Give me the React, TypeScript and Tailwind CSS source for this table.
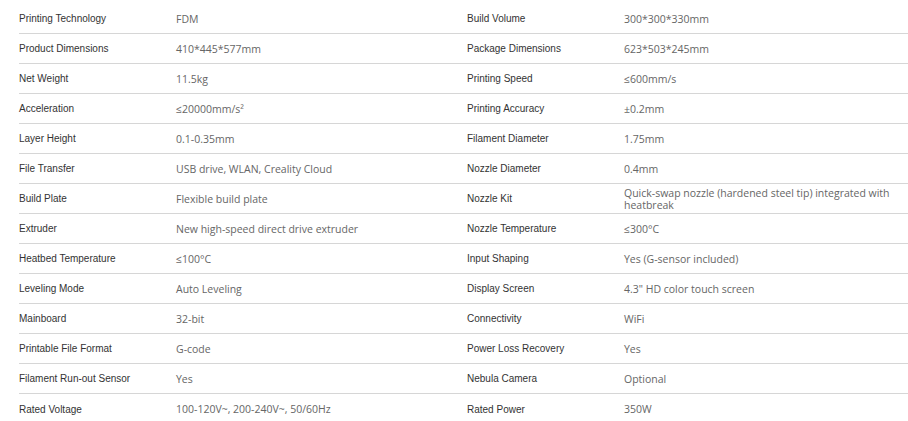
const specs: [string, string, string, string][] = [
  ["Printing Technology", "FDM", "Build Volume", "300*300*330mm"],
  ["Product Dimensions", "410*445*577mm", "Package Dimensions", "623*503*245mm"],
  ["Net Weight", "11.5kg", "Printing Speed", "≤600mm/s"],
  ["Acceleration", "≤20000mm/s²", "Printing Accuracy", "±0.2mm"],
  ["Layer Height", "0.1-0.35mm", "Filament Diameter", "1.75mm"],
  ["File Transfer", "USB drive, WLAN, Creality Cloud", "Nozzle Diameter", "0.4mm"],
  ["Build Plate", "Flexible build plate", "Nozzle Kit", "Quick-swap nozzle (hardened steel tip) integrated with heatbreak"],
  ["Extruder", "New high-speed direct drive extruder", "Nozzle Temperature", "≤300°C"],
  ["Heatbed Temperature", "≤100°C", "Input Shaping", "Yes (G-sensor included)"],
  ["Leveling Mode", "Auto Leveling", "Display Screen", "4.3\" HD color touch screen"],
  ["Mainboard", "32-bit", "Connectivity", "WiFi"],
  ["Printable File Format", "G-code", "Power Loss Recovery", "Yes"],
  ["Filament Run-out Sensor", "Yes", "Nebula Camera", "Optional"],
  ["Rated Voltage", "100-120V~, 200-240V~, 50/60Hz", "Rated Power", "350W"],
]

const label = "text-[10px] text-[#333] font-['Liberation_Sans',Arial,sans-serif]"
const value = "text-[10.5px] leading-[12px] text-[#666] font-['Open_Sans','Noto_Sans',sans-serif]"

export default function App() {
  return (
    <div className="min-h-[421px] bg-white pt-[4px] pl-[19px]">
      {specs.map((row, i) => (
        <div
          key={row[0]}
          className={`grid h-[30px] grid-cols-[157px_291px_157px_1fr] items-center ${
            i < specs.length - 1 ? "border-b border-[#d6d6d6]" : ""
          }`}
        >
          <span className={label}>{row[0]}</span>
          <span className={value}>{row[1]}</span>
          <span className={label}>{row[2]}</span>
          <span className={`${value} pr-[12px]`}>{row[3]}</span>
        </div>
      ))}
    </div>
  )
}
